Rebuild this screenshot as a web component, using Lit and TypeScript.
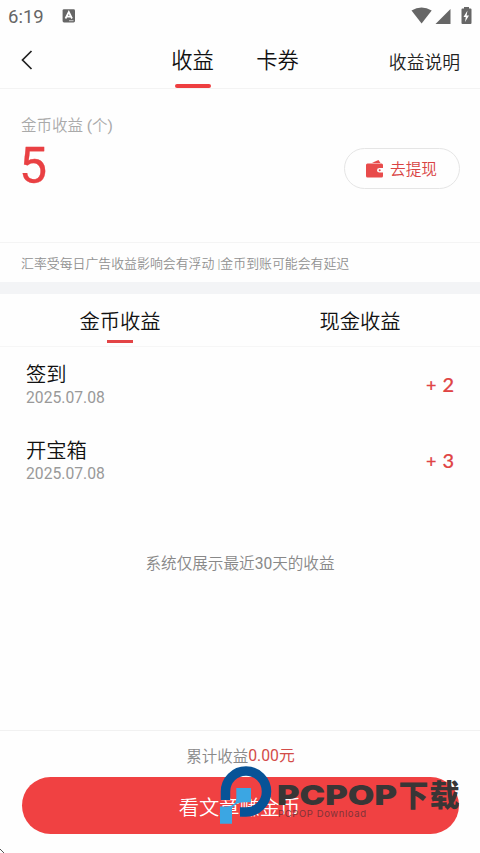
import { LitElement, html, css } from "lit";
import { customElement } from "lit/decorators.js";

@customElement("status-bar")
class StatusBar extends LitElement {
  static styles = css`
    :host { display: flex; height: 32px; align-items: center; padding: 0 8px 0 8px; color: #666; box-sizing: border-box; }
    .time { font: 400 18.500px/32px Roboto, sans-serif; margin: 2px 18px 0 0; }
    .icons { margin-left: auto; display: block; }
  `;
  render() {
    return html`<span class="time">6:19</span>
      <svg width="14" height="14" viewBox="0 0 14 14"><rect x=".6" y=".2" width="12.4" height="13.2" rx="1.4" fill="#666"/><path d="M3.5 9.5 6.8 3l3.2 6.5M4.8 7.7h4" fill="none" stroke="#fff" stroke-width="1.7"/><path d="M7 11.700h4.500" stroke="#ccc"/></svg>
      <svg class="icons" width="61" height="20" viewBox="411 6 61 20" fill="#666"><path d="M411.500 10.500Q421.500 4.500 431.700 10.500L421.600 23.500Z"/><path d="M435.500 24 450.500 9v15z"/><path d="M464 7h5v1.500h1.500q1 0 1 1v13.500q0 1-1 1h-8q-1 0-1-1V9.500q0-1 1-1h1.500z"/><path d="m467.500 10.500-4 6.500h2.300l-.8 5 4-6.500h-2.400z" fill="#fff"/></svg>`;
  }
}

@customElement("income-row")
class IncomeRow extends LitElement {
  static properties = { name: {}, date: {}, amount: {} };
  declare name: string;
  declare date: string;
  declare amount: string;
  static styles = css`
    :host { display: flex; height: 76px; box-sizing: border-box; justify-content: space-between; padding: 13px 26px 0; }
    .name { font: 350 20.300px/26px "Noto Sans CJK SC", sans-serif; color: #111; }
    .date { font: 400 15.700px/22px Roboto, sans-serif; color: #999; margin-top: 1px; }
    .amount { display: flex; align-items: center; gap: 6px; height: 48px; font: 500 20px/48px Lato, sans-serif; color: #e04444; -webkit-text-stroke: 0.2px #e04444; }
    .plus { font-size: 18px; padding-top: 2px; }
  `;
  render() {
    return html`<div><div class="name">${this.name}</div><div class="date">${this.date}</div></div><div class="amount"><span class="plus">+</span><span>${this.amount}</span></div>`;
  }
}

@customElement("app-root")
class AppRoot extends LitElement {
  static styles = css`
    :host { display: flex; flex-direction: column; position: relative; width: 480px; height: 853px; overflow: hidden; background: #fefefe; font-family: "Noto Sans CJK SC", sans-serif; font-weight: 350; color: #222; }
    * { box-sizing: border-box; }
    .nav { height: 57px; display: grid; grid-template-columns: 150px 85px 85px 1fr; border-bottom: 1px solid #f3f3f3; align-items: stretch; }
    .back { margin: 17px 0 0 20px; }
    .tab { display: flex; flex-direction: column; align-items: center; font-size: 21.300px; line-height: 32px; padding-top: 11px; color: #111; }
    .line { width: 36px; height: 4px; border-radius: 2px; background: #ee3e40; margin-top: 9px; }
    .help { justify-self: end; padding-right: 20px; font-size: 17.800px; line-height: 32px; padding-top: 13px; }
    .summary { height: 154px; display: flex; justify-content: space-between; padding: 26px 20px 0 21px; border-bottom: 1px solid #f4f4f4; }
    .label { color: #aaa; font-size: 15.500px; line-height: 22px; font-family: Roboto, "Noto Sans CJK SC", sans-serif; }
    .paren { font-weight: 400; }
    .total { color: #e94043; font: 400 50px/52px Roboto, sans-serif; margin-top: 3px; margin-left: -2px; -webkit-text-stroke: 0.3px #e94043; }
    .cash { width: 116px; height: 41px; border: 1.500px solid #e5e5e5; border-radius: 21px; margin-top: 33px; display: flex; align-items: center; padding-left: 20px; gap: 6px; color: #d94343; font-size: 15.700px; }
    .note { height: 39px; padding-left: 21px; color: #919191; font-size: 12.900px; line-height: 42px; white-space: nowrap; font-family: Roboto, "Noto Sans CJK SC", sans-serif; }
    .band { height: 12px; background: #f3f4f6; }
    .subtabs { display: grid; grid-template-columns: 1fr 1fr; height: 53px; border-bottom: 1px solid #f6f6f6; text-align: center; font-size: 20.300px; line-height: 30px; padding-top: 11px; color: #111; }
    .subline { width: 26px; height: 3px; background: #e34446; margin: 5px auto 0; }
    .recent { text-align: center; font: 350 15.600px/24px "Noto Sans CJK SC", sans-serif; color: #888; margin-top: 51px; }
    .recent span { font: 400 15.600px/20px Roboto, sans-serif; }
    .footer { margin-top: auto; height: 123px; border-top: 1px solid #f1f1f1; padding: 11px 21px 0 22px; text-align: center; }
    .sum { display: flex; justify-content: center; height: 26px; color: #888; font-size: 15.500px; line-height: 26px; }
    .sum b { font: 400 15.800px/28px Roboto, "Noto Sans CJK SC", sans-serif; color: #d34c49; }
    .read { height: 57px; border-radius: 29px; background: #f04142; margin-top: 9px; color: #fff; font-size: 20.300px; line-height: 59px; padding-right: 2px; }
    .brand { position: absolute; left: 219px; top: 765px; width: 250px; height: 62px; }
    .latin { font: 900 27.500px Inter, sans-serif; }
    .han { font: 900 30px "Noto Sans CJK SC", sans-serif; }
    .sub { font: 400 9.500px Inter, sans-serif; }
    .corner { position: absolute; left: 0; bottom: 0; }
  `;
  render() {
    return html`
      <status-bar></status-bar>
      <nav class="nav">
        <svg class="back" width="16" height="22" viewBox="0 0 16 22"><path d="M11.500 2 2.500 11l9 9" fill="none" stroke="#222" stroke-width="1.700"/></svg>
        <div class="tab">收益<div class="line"></div></div>
        <div class="tab">卡券</div>
        <div class="help">收益说明</div>
      </nav>
      <section class="summary">
        <div><div class="label">金币收益 <span class="paren">(</span>个<span class="paren">)</span></div><div class="total">5</div></div>
        <div class="cash"><svg width="19" height="20" viewBox="0 0 19 20"><path d="M7 4 10 2.500 13.500 1l2 3z" fill="#e84b4b"/><path d="M2.500 4.500h14q1.500 0 1.500 1.500V9h-3.500q-2.500 0-2.500 2.200t2.500 2.200H18V17q0 1.500-1.500 1.500h-14Q1 18.500 1 17V6Q1 4.500 2.500 4.500z" fill="#e84b4b"/><circle cx="14.700" cy="11.200" r="1" fill="#e84b4b"/></svg>去提现</div>
      </section>
      <div class="note">汇率受每日广告收益影响会有浮动 |金币到账可能会有延迟</div>
      <div class="band"></div>
      <div class="subtabs"><div>金币收益<div class="subline"></div></div><div>现金收益</div></div>
      <income-row name="签到" date="2025.07.08" amount="2"></income-row>
      <income-row name="开宝箱" date="2025.07.08" amount="3"></income-row>
      <div class="recent">系统仅展示最近<span>30</span>天的收益</div>
      <footer class="footer"><div class="sum">累计收益<b>0.00元</b></div><div class="read">看文章赚金币</div></footer>
      <svg class="brand" viewBox="219 765 250 62">
        <path d="M225.500 800V791.500A20.500 20.500 0 1 1 246 812H240" fill="none" stroke="#075397" stroke-width="9.500"/>
        <path d="M236.300 788H251v14.300h-7.500q-7.500 0-11.500 6v15.500h-12V806.500h7q9.300-1 9.300-8z" fill="#3ba6e3"/>
        <text class="latin" x="277" y="805" fill="#393636" textLength="120" lengthAdjust="spacingAndGlyphs">PCPOP</text>
        <text class="han" x="398.500 429.500" y="806" fill="#393636">下载</text>
        <text class="sub" x="278" y="817" fill="#813338" textLength="88">PCPOP Download</text>
      </svg>
      <svg class="corner" width="4" height="6" viewBox="0 0 4 6"><path d="M0 2 4 6" stroke="#555"/></svg>`;
  }
}
